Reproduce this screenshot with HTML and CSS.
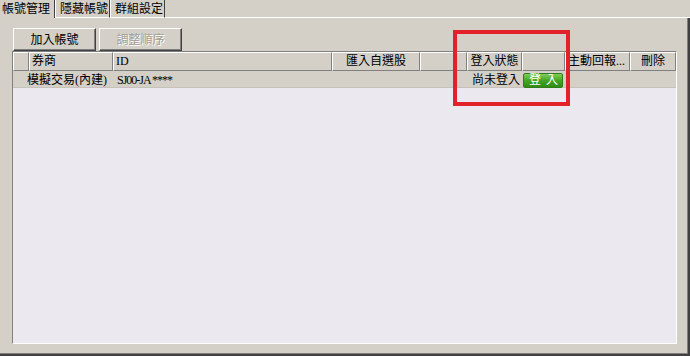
FILE: index.html
```html
<!DOCTYPE html>
<html lang="zh-Hant">
<head>
    <meta charset="UTF-8">
    <title>帳號管理</title>
    <link rel="stylesheet" href="styles.css">
</head>
<body>
    <div class="window">
        <div class="tabs">
            <div class="tab active">帳號管理</div>
            <div class="tab">隱藏帳號</div>
            <div class="tab">群組設定</div>
            <div class="tab-fill"></div>
        </div>
        <div class="panel">
            <div class="toolbar">
                <button class="btn">加入帳號</button>
                <button class="btn" disabled>調整順序</button>
            </div>
            <div class="list">
                <div class="list-head">
                    <div class="col"></div>
                    <div class="col">券商</div>
                    <div class="col">ID</div>
                    <div class="col center">匯入自選股</div>
                    <div class="col"></div>
                    <div class="col center">登入狀態</div>
                    <div class="col"></div>
                    <div class="col">主動回報...</div>
                    <div class="col center">刪除</div>
                </div>
                <div class="list-row">
                    <div class="cell"></div>
                    <div class="cell broker">模擬交易(內建)</div>
                    <div class="cell id">SJ00-JA ****</div>
                    <div class="cell"></div>
                    <div class="cell"></div>
                    <div class="cell status">尚未登入</div>
                    <div class="cell"><span class="login-btn">登入</span></div>
                    <div class="cell"></div>
                    <div class="cell"></div>
                </div>
            </div>
        </div>
        <div class="mark"></div>
    </div>
</body>
</html>
```

FILE: styles.css
```css
body {
    margin: 0;
    background: #d4d0c8;
    font-family: "Liberation Serif", "Noto Sans CJK TC", serif;
    font-size: 12px;
    color: #000;
}
.window {
    position: relative;
    width: 690px;
    height: 356px;
    overflow: hidden;
}
.tabs {
    display: flex;
    height: 18px;
}
.tab {
    box-sizing: border-box;
    height: 18px;
    line-height: 15px;
    padding: 2px 1px 0 4px;
    border-left: 1px solid #fff;
    border-right: 1px solid #404040;
    border-bottom: 1px solid #fff;
    white-space: nowrap;
}
.tab.active {
    padding: 2px 4px 0 2px;
    border-left: none;
    border-bottom: none;
}
.tab-fill {
    flex: 1;
    border-bottom: 1px solid #fff;
}
.panel {
    box-sizing: border-box;
    height: 338px;
    padding: 10px 11px 10px 12px;
    border-right: 2px solid #404040;
    border-bottom: 2px solid #404040;
    box-shadow: inset -1px -1px #808080;
    display: flex;
    flex-direction: column;
}
.toolbar {
    display: flex;
    gap: 3px;
    height: 23px;
    padding-left: 1px;
}
.btn {
    box-sizing: border-box;
    width: 83px;
    height: 23px;
    padding: 0;
    background: #d4d0c8;
    border: 1px solid;
    border-color: #fff #404040 #404040 #fff;
    box-shadow: inset -1px -1px #808080;
    font: inherit;
    color: #000;
    line-height: 20px;
}
.btn:disabled {
    color: #a29e96;
    text-shadow: 1px 1px #fff;
}
.list {
    flex: 1;
    border: 1px solid;
    border-color: #808080 #fff #fff #808080;
    background: #ebe9ef;
}
.list-head,
.list-row {
    display: grid;
    grid-template-columns: 16px 84px 219px 88px 47px 55px 43px 65px 1fr;
}
.list-head {
    height: 19px;
    background: #d4d0c8;
}
.col {
    box-sizing: border-box;
    border-top: 1px solid #fff;
    border-left: 1px solid #fff;
    border-right: 1px solid #808080;
    border-bottom: 1px solid #808080;
    padding: 0 2px;
    line-height: 16px;
    white-space: nowrap;
    overflow: hidden;
}
.col.center {
    text-align: center;
}
.list-row {
    height: 17px;
    box-sizing: border-box;
    background: #d4d0c8;
    border-bottom: 1px solid #c6c2bb;
}
.cell {
    line-height: 16px;
    padding-top: 1px;
    white-space: nowrap;
}
.broker {
    margin-left: -2px;
}
.id {
    padding-left: 4px;
    letter-spacing: -1px;
}
.status {
    padding-left: 5px;
}
.login-btn {
    display: block;
    box-sizing: border-box;
    width: 40px;
    height: 15px;
    margin: 1px 0 0 1px;
    border: 1px solid #2f7d1c;
    border-radius: 2px;
    background: linear-gradient(to bottom, #7fcf55, #45a527 50%, #2f8c18);
    color: #fff;
    font-size: 12px;
    line-height: 13px;
    text-align: center;
    letter-spacing: 5px;
    text-indent: 5px;
}
.mark {
    position: absolute;
    left: 453px;
    top: 30px;
    width: 117px;
    height: 76px;
    box-sizing: border-box;
    border: 4px solid #e3212b;
}
```
